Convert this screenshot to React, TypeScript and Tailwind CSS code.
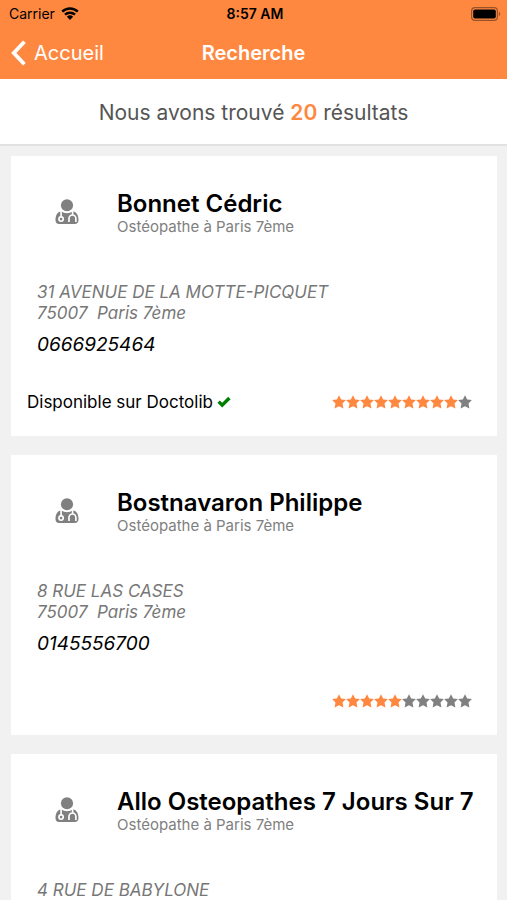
type Practitioner = {
  name: string
  job: string
  street: string
  city?: string
  phone?: string
  doctolib: boolean
  rating: number
}

const practitioners: Practitioner[] = [
  {
    name: "Bonnet Cédric",
    job: "Ostéopathe à Paris 7ème",
    street: "31 AVENUE DE LA MOTTE-PICQUET",
    city: "75007  Paris 7ème",
    phone: "0666925464",
    doctolib: true,
    rating: 9,
  },
  {
    name: "Bostnavaron Philippe",
    job: "Ostéopathe à Paris 7ème",
    street: "8 RUE LAS CASES",
    city: "75007  Paris 7ème",
    phone: "0145556700",
    doctolib: false,
    rating: 5,
  },
  {
    name: "Allo Osteopathes 7 Jours Sur 7",
    job: "Ostéopathe à Paris 7ème",
    street: "4 RUE DE BABYLONE",
    doctolib: false,
    rating: 5,
  },
]

const WifiIcon = () => (
  <svg viewBox="0 0 18 13" className="h-[13px] w-[18px]" aria-hidden="true">
    <path
      d="M1.2 4.7a11.2 11.2 0 0 1 15.6 0M4 7.7a7.2 7.2 0 0 1 10 0"
      fill="none"
      stroke="currentColor"
      strokeWidth="2.5"
    />
    <path d="M9 13 5.9 9.8a4.5 4.5 0 0 1 6.2 0Z" fill="currentColor" />
  </svg>
)

const BatteryIcon = () => (
  <svg viewBox="0 0 30 14" className="h-[14px] w-[30px]" aria-hidden="true">
    <rect x="0.6" y="0.6" width="25.8" height="12.8" rx="3.4" fill="none" stroke="#000" strokeOpacity="0.4" strokeWidth="1.2" />
    <rect x="2.2" y="2.4" width="22.6" height="9.2" rx="1.8" fill="#000" />
    <path d="M27.8 4.8c1.8.6 1.8 3.8 0 4.4Z" fill="#000" fillOpacity="0.4" />
  </svg>
)

const DoctorIcon = () => (
  <svg viewBox="0 0 72 76" className="h-[25px] w-6 text-[#808080]" aria-hidden="true">
    <circle cx="36" cy="19" r="18.5" fill="currentColor" />
    <path
      d="M18 37C29 45 43 45 54 37 66 39 71 50 71 64 71 72 66 76 60 76H12C5 76 1 72 1 64 1 50 6 39 18 37Z"
      fill="currentColor"
    />
    <g fill="none" stroke="#fff" strokeWidth="5">
      <path d="M18 35V54M53 35V48M42 70V59a10.5 10.5 0 0 1 21 0V70" />
      <circle cx="18" cy="61" r="6.5" />
    </g>
  </svg>
)

const CheckIcon = () => (
  <svg viewBox="0 0 14 12" className="h-3 w-[14px]" aria-hidden="true">
    <path d="M1.6 5.6 5.2 9.2 12.4 2" fill="none" stroke="#008000" strokeWidth="3.4" />
  </svg>
)

const StarIcon = ({ className }: { className: string }) => (
  <svg viewBox="0 0 14 14" className={className} aria-hidden="true">
    <path d="M7 .2 9.2 4.5l4.7.6-3.4 3.5.9 4.9L7 11.3l-4.4 2.2.9-4.9L.1 5.1l4.7-.6Z" fill="currentColor" />
  </svg>
)

const StatusBar = () => (
  <div className="grid h-[27px] grid-cols-3 items-center pr-[6px] pl-[9px] text-sm text-black">
    <div className="flex items-center gap-[6px]">
      <span>Carrier</span>
      <WifiIcon />
    </div>
    <span className="text-center font-semibold">8:57 AM</span>
    <div className="flex justify-end">
      <BatteryIcon />
    </div>
  </div>
)

const NavBar = () => (
  <nav className="grid h-[52px] grid-cols-3 items-center px-[11px] text-xl text-white">
    <a href="#accueil" className="flex items-center gap-2">
      <svg viewBox="0 0 15 26" className="h-[26px] w-[15px]" aria-hidden="true">
        <path d="M13.4 1.8 2.8 13l10.6 11.2" fill="none" stroke="currentColor" strokeWidth="3.8" />
      </svg>
      Accueil
    </a>
    <h1 className="text-center font-semibold">Recherche</h1>
  </nav>
)

const Rating = ({ value }: { value: number }) => (
  <div className="flex" role="img" aria-label={`${value} sur 10`}>
    {Array.from({ length: 10 }, (_, i) => (
      <StarIcon key={i} className={i < value ? "size-[14px] text-[#ff8841]" : "size-[14px] text-[#808080]"} />
    ))}
  </div>
)

const PractitionerCard = ({ item }: { item: Practitioner }) => (
  <article className="flex h-[280px] shrink-0 flex-col bg-white pt-[33px] pr-[25px] pb-[22px] pl-4">
    <header className="flex">
      <div className="w-[90px] shrink-0 pt-[10px] pl-7">
        <DoctorIcon />
      </div>
      <div>
        <h2 className="text-2xl leading-[30px] font-semibold whitespace-nowrap text-black">{item.name}</h2>
        <p className="text-[15px] leading-4 text-[#808080]">{item.job}</p>
      </div>
    </header>
    <address className="mt-[47px] pl-[10px] text-[17px] leading-[21px] whitespace-pre text-[#777777]">
      <p>{item.street}</p>
      {item.city && <p>{item.city}</p>}
      {item.phone && (
        <a href={`tel:${item.phone}`} className="mt-[9px] block text-[19px] leading-6 text-black">
          {item.phone}
        </a>
      )}
    </address>
    <footer className="mt-auto flex h-6 items-center justify-between">
      <div className="flex items-center gap-1 text-[17px] leading-6 text-black">
        {item.doctolib && (
          <>
            Disponible sur Doctolib
            <CheckIcon />
          </>
        )}
      </div>
      <Rating value={item.rating} />
    </footer>
  </article>
)

export default function App() {
  return (
    <div className="flex h-screen flex-col overflow-hidden bg-[#f1f1f1] font-['Inter',sans-serif]">
      <div className="shrink-0 bg-[#ff8841]">
        <StatusBar />
        <NavBar />
      </div>
      <p className="shrink-0 border-b-2 border-[#e2e2e2] bg-white pt-[18px] pb-[15px] text-center text-[21px] leading-8 text-[#555555]">
        Nous avons trouvé <span className="font-semibold text-[#ff8841]">20</span> résultats
      </p>
      <main className="flex flex-col gap-[19px] pt-[10px] pr-[10px] pl-[11px]">
        {practitioners.map((item) => (
          <PractitionerCard key={item.name} item={item} />
        ))}
      </main>
    </div>
  )
}
